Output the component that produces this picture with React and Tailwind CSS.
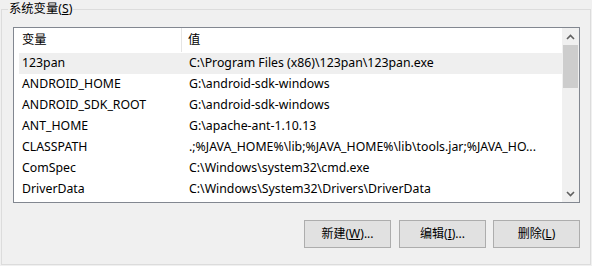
import React from "react"

const rows = [
  ["123pan", "C:\\Program Files (x86)\\123pan\\123pan.exe"],
  ["ANDROID_HOME", "G:\\android-sdk-windows"],
  ["ANDROID_SDK_ROOT", "G:\\android-sdk-windows"],
  ["ANT_HOME", "G:\\apache-ant-1.10.13"],
  ["CLASSPATH", ".;%JAVA_HOME%\\lib;%JAVA_HOME%\\lib\\tools.jar;%JAVA_HO..."],
  ["ComSpec", "C:\\Windows\\system32\\cmd.exe"],
  ["DriverData", "C:\\Windows\\System32\\Drivers\\DriverData"],
]

const font = { fontFamily: "'Noto Sans', 'Noto Sans CJK SC', sans-serif" }

const Button = ({ label, hot, tail, className = "" }) => (
  <button className={"w-[87px] h-[28px] bg-[#e1e1e1] border border-[#adadad] text-[12px] text-black flex items-center justify-center " + className}>
    {label}(<span className="underline">{hot}</span>){tail}
  </button>
)

const App = () => {
  return (
    <div className="w-[592px] h-[266px] bg-[#f0f0f0] relative text-[12.3px] text-black" style={font}>
      <div className="absolute left-[8px] top-[1px] px-[1px] bg-[#f0f0f0] leading-[16px]">
        系统变量(<span className="underline">S</span>)
      </div>
      <div className="ml-[1px] pt-[9px]">
        <div className="w-[590px] h-[256px] border border-[#dcdcdc] pl-[11px] pt-[17px]">
          <div className="w-[567px] h-[176px] border border-[#828790] bg-white flex">
            <div className="flex-1 flex flex-col">
              <div className="h-[24px] flex items-center">
                <div className="w-[168px] h-full pl-[8px] flex items-center border-r border-[#e5e5e5]">变量</div>
                <div className="pl-[6px]">值</div>
              </div>
              <div className="pl-[5px] pt-[1px]">
                {rows.map(([name, value], i) => (
                  <div
                    key={name}
                    className={"h-[21px] flex items-center " + (i === 0 ? "bg-[#efefef]" : "")}
                  >
                    <div className="w-[164px] pl-[3px] whitespace-nowrap">{name}</div>
                    <div className="pl-[6px] whitespace-nowrap">{value}</div>
                  </div>
                ))}
              </div>
            </div>
            <div className="w-[17px] bg-[#f0f0f0] flex flex-col">
              <div className="h-[17px] flex items-center justify-center">
                <svg width="9" height="6" viewBox="0 0 9 6">
                  <path d="M1 5 L4.5 1.5 L8 5" stroke="#606060" strokeWidth="1.6" fill="none" />
                </svg>
              </div>
              <div className="h-[43px] mx-[1px] bg-[#cdcdcd]" />
              <div className="flex-1" />
              <div className="h-[17px] flex items-center justify-center">
                <svg width="9" height="6" viewBox="0 0 9 6">
                  <path d="M1 1 L4.5 4.5 L8 1" stroke="#606060" strokeWidth="1.6" fill="none" />
                </svg>
              </div>
            </div>
          </div>
          <div className="mt-[17px] flex justify-end w-[567px]">
            <Button label="新建" hot="W" tail="..." />
            <Button label="编辑" hot="I" tail="..." className="ml-[8px]" />
            <Button label="删除" hot="L" tail="" className="ml-[7px]" />
          </div>
        </div>
      </div>
    </div>
  )
}

export default App
